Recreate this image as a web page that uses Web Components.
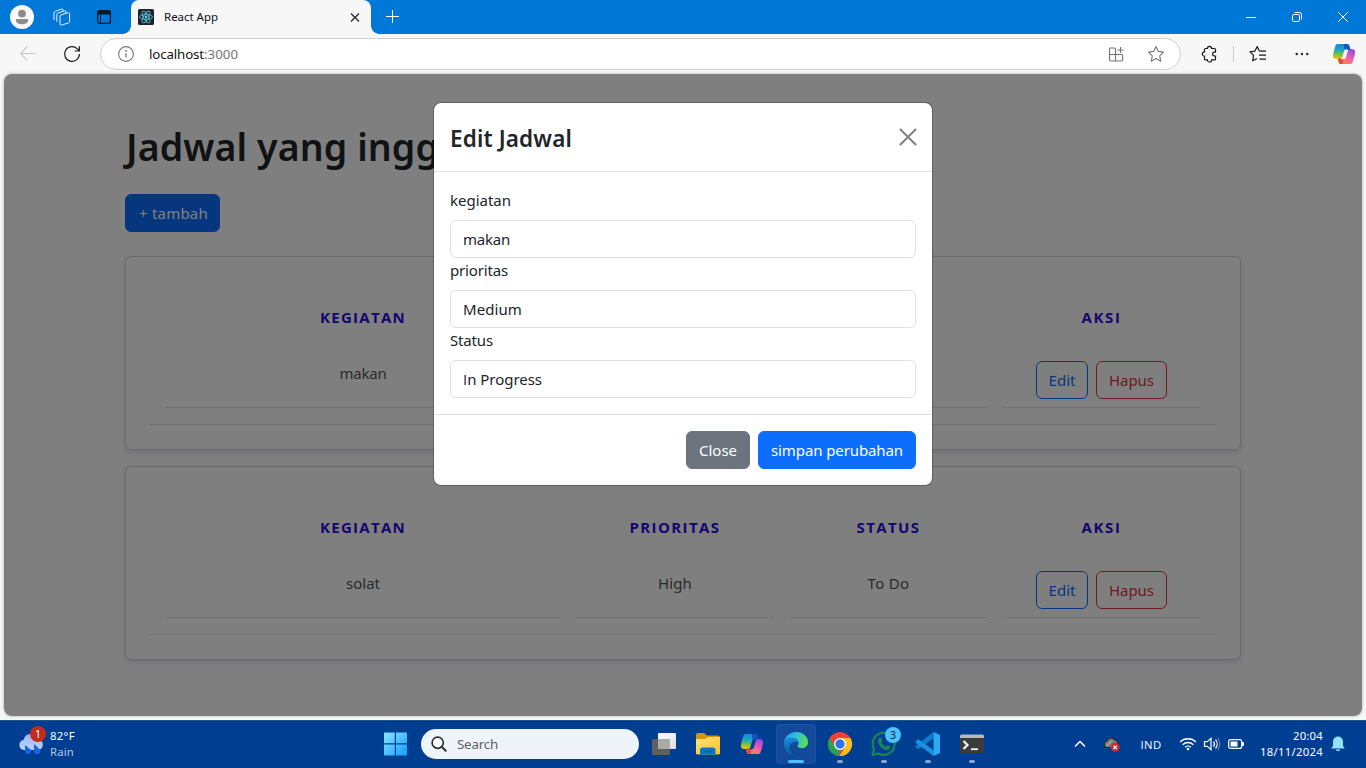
<!DOCTYPE html>
<html lang="id">
<head>
<meta charset="utf-8">
<title>React App</title>
<style>
html,body{margin:0;height:100%;overflow:hidden}
body{font-family:"Noto Sans","Open Sans",sans-serif;background:#f7f7f7}
</style>
</head>
<body>
<desktop-screen></desktop-screen>
<script>
const define = (name, html, setup) => {
  customElements.define(name, class extends HTMLElement {
    connectedCallback() {
      if (this.shadowRoot) return;
      const t = document.createElement('template');
      t.innerHTML = typeof html === 'function' ? html(this) : html;
      this.attachShadow({ mode: 'open' }).append(t.content.cloneNode(true));
      if (setup) setup(this);
    }
  });
};

const ICONS = {
  avatar: [24, 24, `<circle cx="12" cy="12" r="12" fill="#fafafa"/><circle cx="12" cy="8.6" r="3.9" fill="#8b8b8b"/><path d="M7 14h10a1.2 1.2 0 0 1 1.2 1.2c0 2.4-2.8 4-6.2 4s-6.2-1.6-6.2-4A1.2 1.2 0 0 1 7 14z" fill="#8b8b8b"/>`],
  workspaces: [20, 20, `<g transform="translate(-1 0)" fill="#0078d7" stroke="#e6f2fc" stroke-linejoin="round"><path d="M2 13V6c0-.8.4-1.300 1.200-1.600l6.300-2.300c.9-.3 1.500.1 1.500 1v7"/><path d="M4.800 14.800V7.600c0-.8.4-1.300 1.200-1.600l6.400-2.100c.9-.3 1.500.1 1.500 1v8"/><path d="M8 16.900V9.300c0-.8.4-1.200 1.100-1.400l7-2.200c.8-.3 1.500.1 1.500 1v7.700c0 .7-.3 1.100-1 1.400l-7 2.300c-.9.3-1.600-.2-1.600-1.200z"/></g>`],
  tabs: [16, 16, `<path d="M1.600 3.600a2 2 0 0 1 2-2h8.800a2 2 0 0 1 2 2v8.800a2 2 0 0 1-2 2H3.600a2 2 0 0 1-2-2z" fill="none" stroke="#071827" stroke-width="1.300"/><path d="M1.500 5.500V3.500a2 2 0 0 1 2-2h9a2 2 0 0 1 2 2v2z" fill="#071827"/><path d="M4.500 5v9" stroke="#071827"/>`],
  react: [16, 16, `<rect width="16" height="16" rx="1.500" fill="#20232a"/><g fill="none" stroke="#55bdd8" stroke-width=".9"><ellipse cx="8" cy="8" rx="6.500" ry="2.500"/><ellipse cx="8" cy="8" rx="6.500" ry="2.500" transform="rotate(60 8 8)"/><ellipse cx="8" cy="8" rx="6.500" ry="2.500" transform="rotate(120 8 8)"/></g><circle cx="8" cy="8" r="1.300" fill="#61dafb"/>`],
  close: [10, 10, `<path d="M1 1.500l8 8M9 1.500L1 9.500" stroke="#222" stroke-width="1.200"/>`],
  plus: [14, 14, `<path d="M6.500 0v13M0 6.500h13" stroke="#fff"/>`],
  min: [10, 10, `<path d="M0 5.500h10" stroke="#fff"/>`],
  restore: [10, 10, `<rect x=".5" y="2.500" width="7" height="7" rx="1.300" fill="none" stroke="#fff"/><path d="M2.600.5h4.900a2 2 0 0 1 2 2v4.900" fill="none" stroke="#fff"/>`],
  winclose: [10, 10, `<path d="M0 0l10 10M10 0L0 10" stroke="#fff"/>`],
  back: [16, 16, `<path d="M.5 7.500H16M7.300.7L.6 7.500l6.700 6.800" fill="none" stroke="#c8c8c8" stroke-width="1.100"/>`],
  reload: [18, 18, `<path d="M16.400 9A7.400 7.400 0 1 1 14.300 3.800L16 5.500M16.400 1.300V6h-4.700" fill="none" stroke="#1b1b1b" stroke-width="1.200"/>`],
  info: [16, 16, `<circle cx="8" cy="8" r="7.400" fill="none" stroke="#777" stroke-width="1.100"/><path d="M8 7.200v4.300" stroke="#777" stroke-width="1.300"/><circle cx="8" cy="5" r=".9" fill="#777"/>`],
  apps: [16, 16, `<path d="M2.200 2H6.500q1 0 1 1v5.500h-6V2.700Q1.500 2 2.200 2zM1.500 8.500h6V15H2.700Q1.500 15 1.500 13.800zM7.500 8.500h6q1.200 0 1.200 1.200v4.100q0 1.200-1.200 1.200h-6zM12.500 1v6M9.500 4h6" fill="none" stroke="#747474" stroke-width="1.100"/>`],
  star: [18, 18, `<path d="M9 1.500l2.300 4.900 5.300.7-3.900 3.700 1 5.400L9 13.600l-4.700 2.600 1-5.400L1.400 7.100l5.300-.7z" fill="none" stroke="#777" stroke-width="1.100" stroke-linejoin="round"/>`],
  puzzle: [18, 18, `<path d="M5.500 3.500h1.900a2.100 2.100 0 0 1 4.200 0h2.900q1 0 1 1v2.700h-1a1.900 1.900 0 0 0 0 3.800h1v2.900q0 1-1 1h-2.900a2.100 2.100 0 0 1-4.200 0H5.500q-1 0-1-1v-2.600a2.200 2.200 0 0 1 0-4.400V4.500q0-1 1-1z" fill="none" stroke="#1b1b1b" stroke-width="1.200"/>`],
  favs: [18, 18, `<path d="M10.500 6.200L8.200 1.500 6 6.100l-5 .7 3.600 3.600-.9 5.400L8 13.400M10.500 6.200H17M10 10.200h7M10.500 14.200H17" fill="none" stroke="#1b1b1b" stroke-width="1.200" stroke-linejoin="round"/>`],
  dots: [14, 4, `<g fill="#222"><circle cx="1.700" cy="2" r="1.200"/><circle cx="7" cy="2" r="1.200"/><circle cx="12.300" cy="2" r="1.200"/></g>`],
  copilot: [24, 24, `<defs><linearGradient id="a" x1=".4" y1="0" x2=".3" y2="1"><stop stop-color="#1689df"/><stop offset=".4" stop-color="#18a9c8"/><stop offset=".65" stop-color="#6bbf50"/><stop offset="1" stop-color="#f7c800"/></linearGradient><linearGradient id="b" x1=".8" y1="0" x2=".2" y2="1"><stop stop-color="#9348e8"/><stop offset=".45" stop-color="#e55bb4"/><stop offset=".75" stop-color="#ff7570"/><stop offset="1" stop-color="#f9803a"/></linearGradient></defs><path d="M18.500 22H9.200c-1.500 0-2.100-.8-2.600-2.300L5.600 16h3.300c1.600 0 2.300-.9 2.800-2.400L13.500 7h6.300c3.400 0 3.700 2.800 2.900 5.700l-1.500 5.600c-.6 2.300-1.100 3.700-2.700 3.700z" fill="url(#b)"/><path d="M5.500 2h9.300c1.500 0 2.100.8 2.600 2.300L18.400 8h-3.300c-1.600 0-2.300.9-2.800 2.400L10.200 17H4.200C.8 17 .5 14.200 1.300 11.300l1.500-5.600C3.400 3.400 3.900 2 5.500 2z" fill="url(#a)"/><path d="M12 2h3.200c1.200 0 1.900 1 2.300 2.300L18.600 8H15c-1.200 0-1.900.5-2.400 1.500z" fill="#1554bd"/><path d="M5.800 16.500h4.400c1.200 0 1.700-.3 2.200-1.200L10.600 21c-.2.700-.6 1-1.400 1-1.500 0-2.100-.8-2.600-2.300z" fill="#e04a3c"/><path d="M13.500 7.600h2.800l-2.500 8c-.4 1.200-1 1.700-2.100 1.700H8.500c1-.4 1.500-1.200 1.900-2.400l1.500-5.500c.4-1.200.7-1.600 1.600-1.800z" fill="var(--hole,#f7f7f7)"/>`],
  rain: [28, 30, `<defs><linearGradient id="c" x2="0" y2="1"><stop stop-color="#9db8f2"/><stop offset="1" stop-color="#bcd2fb"/></linearGradient></defs><path d="M6 21a5 5 0 0 1-.5-9.900A7.500 7.500 0 0 1 20 10a5.600 5.600 0 0 1 .5 11z" fill="url(#c)"/><path d="M7 16l4 3.200a3 3 0 1 1-4 2.800zM16 15l4.500 4.200a3.200 3.200 0 1 1-4.500 3z" fill="#1763e8"/>`],
  windows: [24, 24, `<defs><linearGradient id="d" x2="1" y2="1"><stop stop-color="#8be3ff"/><stop offset="1" stop-color="#139cf8"/></linearGradient></defs><path transform="translate(-.5 0)" d="M1 .5h10.300v10.700H.5V1zM12.500.5H23l.5.5v10.200h-11zM.5 12.400h10.800v11H1l-.5-.5zM12.500 12.400h11v10.500l-.5.5H12.500z" fill="url(#d)"/>`],
  search: [16, 16, `<circle cx="6.700" cy="6.700" r="5.600" fill="#fff" stroke="#303037" stroke-width="1.700"/><path d="M10.700 10.700l4 4" stroke="#303037" stroke-width="2" stroke-linecap="round"/>`],
  taskview: [24, 24, `<defs><linearGradient id="e" x2="1" y2="1"><stop stop-color="#fff"/><stop offset="1" stop-color="#ddd"/></linearGradient></defs><rect x="6" y="1" width="18" height="16" rx="1" fill="url(#e)"/><rect y="7" width="18" height="16" rx="1" fill="#606060"/><path d="M6 7h12v10H6z" fill="#a9aaa9"/>`],
  folder: [26, 24, `<defs><linearGradient id="f" x2="1" y2="1"><stop stop-color="#ffe37b"/><stop offset="1" stop-color="#fbc02d"/></linearGradient></defs><path d="M1 3q0-2 2-2h6l3 2.500h11q2 0 2 2V12H1z" fill="#d99500"/><path d="M1 7h9l3-2h12v16q0 1.500-1.500 1.500H2.500Q1 22.500 1 21z" fill="url(#f)"/><path d="M5 22.500V18q0-2.500 2.500-2.500h10.500q2.500 0 2.500 2.500v4.500z" fill="#0b74c8"/><path d="M9 19.500h7.500" stroke="#075aa5" stroke-width="1.200"/>`],
  edge: [26, 26, `<defs><linearGradient id="g" x1="0" y1=".3" x2="1" y2=".5"><stop stop-color="#2799e9"/><stop offset=".5" stop-color="#2bc4d5"/><stop offset="1" stop-color="#5fe04b"/></linearGradient><linearGradient id="h" x2="0" y2="1"><stop stop-color="#1688dc"/><stop offset="1" stop-color="#0c59a4"/></linearGradient></defs><path d="M1 13C1 6 6 1 13 1c7 0 12 4.500 12 10 0 4-2.700 6.200-6.200 6.200-3 0-4.300-1.200-4.300-2.200 0-.8 1.100-1.200 1.100-3 0-2.800-2.800-5-6.600-5C4.500 7 1.500 10 1 13z" fill="url(#g)"/><path d="M1 13c.3-3.500 3.300-6 7.200-6 4 0 7.300 2 7.400 4.800-1.400-1.200-3-1.500-4.400-.8C8 12.500 8.300 18 12 20.500c3.500 2.400 8 1.900 11.500-.6C21.500 23 17.800 25 13.500 25 6.500 25 1 19.700 1 13z" fill="url(#h)"/><path d="M11.200 11C7.200 12 5.500 16.500 7.200 20c1.200 2.700 3.900 4.700 6.600 5 4.100 0 7.700-2 9.700-5.100C20 22.400 15.500 22.900 12 20.500 8.300 18 8 12.500 11.200 11z" fill="#114a93"/>`],
  chrome: [26, 26, `<circle cx="13" cy="13" r="12" fill="#e94435"/><path d="M2.600 7L8 16l5 3-1 6A12 12 0 0 1 2.600 7z" fill="#26a252"/><path d="M13 7h10.400A12 12 0 0 1 12.500 25l5.700-9z" fill="#fbc116"/><circle cx="13" cy="13" r="6" fill="#fff"/><circle cx="13" cy="13" r="4.700" fill="#2876e8"/>`],
  whatsapp: [26, 26, `<path d="M3 18A11 11 0 1 1 7.500 22.500L1.600 24z" fill="none" stroke="#188552" stroke-width="2.200" stroke-linejoin="round"/><path d="M8 7.500c1-1.200 2-1 2.500 0l.9 2.100c.3.700-.7 1.500-1 1.900 1 2 2.300 3.300 4.500 4.200.6-.6 1.200-1.700 1.800-1.400l2.300 1.100c1 .5-.3 3.300-2.800 3.600C11.500 19.500 6 13 7 9z" fill="#188552"/>`],
  vscode: [26, 26, `<path d="M18.500 1v6.500L3.200 18.200.8 16.300v-1.500z" fill="#0b7dcc"/><path d="M.8 10.300l2.400-2L18.500 19v6L.8 11.600z" fill="#1595df"/><path d="M18.500 1L25 4v18l-6.500 3z" fill="#2aaaf3"/>`],
  terminal: [26, 22, `<path d="M1 3q0-1.500 1.500-1.500h21Q25 1.500 25 3v2.500H1z" fill="#b8b8b8"/><path d="M1 5h24v13.500q0 1.500-1.500 1.500h-21Q1 20 1 18.500z" fill="#3b3b3b"/><path d="M4.500 8l4 4-4 4" fill="none" stroke="#f3f3f3" stroke-width="2.200"/><path d="M12 16.200h7" stroke="#f3f3f3" stroke-width="1.800"/>`],
  chevron: [12, 8, `<path d="M1 6.500l5-5 5 5" fill="none" stroke="#fff" stroke-width="1.500"/>`],
  cloud: [18, 16, `<path d="M4 11.500a3.300 3.300 0 0 1 0-6.500A4.500 4.500 0 0 1 12 4a4 4 0 0 1 1 7.500z" fill="#777c82" stroke="#26282c" stroke-width="1.200"/><path d="M3 10l6-5" stroke="#a6a7aa" stroke-width="1.500"/><circle cx="12.200" cy="11.300" r="4.500" fill="#d92532"/><path d="M10.500 9.600l3.400 3.400M13.900 9.600l-3.400 3.400" stroke="#fff" stroke-width="1.100"/>`],
  wifi: [18, 16, `<g fill="none" stroke="#fff" stroke-width="1.350"><path d="M1 6a11.400 11.400 0 0 1 16 0M3.700 8.700a7.500 7.500 0 0 1 10.600 0M6.200 11.200a4 4 0 0 1 5.600 0"/></g><circle cx="9" cy="13" r="1.300" fill="#fff"/>`],
  speaker: [18, 16, `<g fill="none" stroke="#fff" stroke-width="1.200"><path d="M1.500 5.700h2.800L8 2.400v11.200l-3.700-3.300H1.500zM10.500 5.500a4 4 0 0 1 0 5M12.500 3.700a6.500 6.500 0 0 1 0 8.600"/><path d="M14.500 2a9 9 0 0 1 0 12" stroke="#5a7fb9"/></g>`],
  battery: [18, 12, `<rect x="1.600" y="1.600" width="13" height="8.800" rx="2" fill="none" stroke="#fff" stroke-width="1.200"/><rect x="3.500" y="3.500" width="7" height="5" rx=".5" fill="#fff"/><path d="M16 4v4" stroke="#fff" stroke-width="1.800"/>`],
  bell: [16, 18, `<path d="M8 1.500a5 5 0 0 1 5 5v4.200l1.700 2.800H1.300L3 10.700V6.500a5 5 0 0 1 5-5zM5.600 14.500h4.800A2.500 2.500 0 0 1 5.600 14.500z" fill="#8fe3ff"/>`],
  modalclose: [18, 18, `<path d="M1.500 1.500l15 15M16.500 1.500l-15 15" stroke="#808080" stroke-width="2" stroke-linecap="round"/>`],
};

define('app-icon', el => {
  const [w, h, body] = ICONS[el.getAttribute('name')];
  return `<style>:host{display:block;flex:none;line-height:0}svg{display:block}</style>
  <svg width="${w}" height="${h}" viewBox="0 0 ${w} ${h}">${body}</svg>`;
});

/* A run of text tracked so that it occupies the width given in "w".
   The "plain" attribute picks the face whose capital I has no serifs. */
define('fit-text', `<style>:host{display:inline-block;white-space:nowrap}:host([plain]){font-family:"Open Sans",sans-serif}</style><span><slot></slot></span>`, el => {
  const w = +el.getAttribute('w');
  const natural = el.shadowRoot.querySelector('span').getBoundingClientRect().width;
  el.style.letterSpacing = (w - natural) / el.textContent.length + 'px';
});

define('icon-cell', el => `<style>
  :host{display:flex;flex:none;align-items:center;justify-content:center;width:${el.getAttribute('w')}px;height:100%;position:relative}
</style><slot></slot>`);

define('title-bar', `<style>
  :host{display:flex;height:34px;background:#0078d7;align-items:center}
  .tab{position:relative;display:flex;align-items:center;box-sizing:border-box;width:240px;height:34px;background:#f7f7f7;border-radius:8px 8px 0 0;padding:0 11px 0 7px;font-size:11.500px;color:#111;margin-left:5px}
  .tab::before,.tab::after{content:"";position:absolute;bottom:0;width:8px;height:8px}
  .tab::before{left:-8px;background:radial-gradient(circle at 0 0,transparent 7.500px,#f7f7f7 8px)}
  .tab::after{right:-8px;background:radial-gradient(circle at 100% 0,transparent 7.500px,#f7f7f7 8px)}
  .tab fit-text{margin:-1px 0 0 10px;flex:1}
  .gap{flex:1}
</style>
<icon-cell w="44"><app-icon name="avatar"></app-icon></icon-cell>
<icon-cell w="37"><app-icon name="workspaces"></app-icon></icon-cell>
<icon-cell w="45"><app-icon name="tabs"></app-icon></icon-cell>
<div class="tab"><app-icon name="react"></app-icon><fit-text w="54">React App</fit-text><app-icon name="close"></app-icon></div>
<icon-cell w="43"><app-icon name="plus"></app-icon></icon-cell>
<div class="gap"></div>
<icon-cell w="46"><app-icon name="min"></app-icon></icon-cell>
<icon-cell w="46"><app-icon name="restore"></app-icon></icon-cell>
<icon-cell w="46"><app-icon name="winclose"></app-icon></icon-cell>`);

define('address-bar', `<style>
  :host{display:flex;height:40px;background:#f7f7f7;align-items:center;padding:0 2px 0 6px}
  .pill{display:flex;align-items:center;box-sizing:border-box;height:32px;width:1081px;margin:0 6px;border:1px solid #cfcfcf;border-radius:16px;background:#fff;padding:0 15px 0 17px}
  .url{flex:1;display:flex;margin-left:15px;font-size:13.300px;color:#111}
  .port{color:#767676}
  .pill app-icon+app-icon{margin-left:23px}
  .rule{width:1px;height:16px;background:#ccc;margin:0 2px}
</style>
<icon-cell w="44"><app-icon name="back"></app-icon></icon-cell>
<icon-cell w="44"><app-icon name="reload"></app-icon></icon-cell>
<div class="pill"><app-icon name="info"></app-icon>
  <div class="url"><fit-text w="55">localhost</fit-text><fit-text class="port" w="34">:3000</fit-text></div>
  <app-icon name="apps"></app-icon><app-icon name="star"></app-icon></div>
<icon-cell w="44"><app-icon name="puzzle"></app-icon></icon-cell>
<div class="rule"></div>
<icon-cell w="44"><app-icon name="favs"></app-icon></icon-cell>
<icon-cell w="44"><app-icon name="dots"></app-icon></icon-cell>
<icon-cell w="40"><app-icon name="copilot"></app-icon></icon-cell>`);

const BUTTONS = {
  primary: 'background:#0d6efd;border-color:#0d6efd;color:#fff',
  secondary: 'background:#6c757d;border-color:#6c757d;color:#fff',
  'outline-primary': 'border-color:#0d6efd;color:#0d6efd',
  'outline-danger': 'border-color:#dc3545;color:#dc3545',
};
define('bs-button', el => `<style>
  :host{display:flex;flex:none;box-sizing:border-box;height:38px;width:${el.getAttribute('w')}px;align-items:center;justify-content:center;border:1px solid;border-radius:6px;font-size:15px;line-height:24px;${BUTTONS[el.getAttribute('variant')]}}
</style><slot></slot>`);

define('schedule-card', `<style>
  :host{display:block;box-sizing:border-box;height:194px;border:1px solid #d4d4d4;border-radius:6px;padding:24px;box-shadow:0 2px 6px rgba(20,10,120,.15)}
  .table{display:grid;grid-template-columns:394px 198px 197px 197px;column-gap:16px;row-gap:16px;padding:16px;border-bottom:1px solid #dee2e6}
  .th{padding:8px 0;line-height:24px;font-size:15px;font-weight:700;color:#2a0ae0;text-align:center}
  .td{box-sizing:border-box;height:55px;padding-top:8px;line-height:24px;font-size:15px;color:#555;border-bottom:1px solid #dee2e6;text-align:center}
  .act{display:flex;justify-content:center;gap:8px}
</style>
<div class="table">
  <div class="th"><fit-text plain w="86">KEGIATAN</fit-text></div><div class="th"><fit-text plain w="91">PRIORITAS</fit-text></div><div class="th"><fit-text plain w="64">STATUS</fit-text></div><div class="th"><fit-text plain w="40">AKSI</fit-text></div>
  <div class="td"><slot name="kegiatan"></slot></div><div class="td"><slot name="prioritas"></slot></div><div class="td"><slot name="status"></slot></div>
  <div class="td act"><bs-button w="52" variant="outline-primary"><fit-text w="27">Edit</fit-text></bs-button><bs-button w="71" variant="outline-danger"><fit-text w="45">Hapus</fit-text></bs-button></div>
</div>`);

define('form-field', `<style>
  :host{display:block;font-size:15px;line-height:24px;color:#212529}
  .box{box-sizing:border-box;height:38px;margin-top:8px;padding:6px 12px;border:1px solid #dee2e6;border-radius:6px}
</style><slot name="label"></slot><div class="box"><slot></slot></div>`);

define('edit-modal', `<style>
  :host{position:absolute;left:429px;top:28px;box-sizing:border-box;width:500px;border:1px solid rgba(0,0,0,.24);background:#fff;background-clip:padding-box;border-radius:8px;color:#212529}
  header{display:flex;align-items:center;justify-content:space-between;height:36px;padding:16px 15px 16px 16px;border-bottom:1px solid #dee2e6;font-size:22.500px;font-weight:600}
  header fit-text{margin-top:2px}
  main{padding:16px}
  footer{display:flex;justify-content:flex-end;gap:8px;padding:16px;border-top:1px solid #dee2e6}
  .i{font-family:"Open Sans",sans-serif}
</style>
<header><fit-text w="122">Edit Jadwal</fit-text><app-icon name="modalclose"></app-icon></header>
<main>
  <form-field><fit-text slot="label" w="61">kegiatan</fit-text><fit-text w="47">makan</fit-text></form-field>
  <form-field><fit-text slot="label" w="58">prioritas</fit-text><fit-text w="59">Medium</fit-text></form-field>
  <form-field><fit-text slot="label" w="43">Status</fit-text><fit-text w="79"><span class="i">I</span>n Progress</fit-text></form-field>
</main>
<footer><bs-button w="64" variant="secondary"><fit-text w="38">Close</fit-text></bs-button><bs-button w="158" variant="primary"><fit-text w="132">simpan perubahan</fit-text></bs-button></footer>`);

define('jadwal-page', `<style>
  :host{display:block;position:relative;box-sizing:border-box;height:642px;margin:0 4px 4px;padding:50px 121px 0;background:#fff;border-radius:8px;overflow:hidden;box-shadow:0 0 3px rgba(0,0,0,.35)}
  h1{margin:0 0 22px;height:48px;line-height:46px;font-size:37.500px;font-weight:560;color:#212529;white-space:nowrap}
  h1 fit-text{margin-left:1px}
  schedule-card{margin-bottom:16px}
  bs-button{margin-bottom:24px}
  bs-button fit-text{margin-left:2px}
  .backdrop{position:absolute;inset:0;background:rgba(0,0,0,.5)}
</style>
<h1><fit-text w="313">Jadwal yang ingg</fit-text></h1>
<bs-button w="95" variant="primary"><fit-text w="69">+ tambah</fit-text></bs-button>
<schedule-card><fit-text slot="kegiatan" w="47">makan</fit-text></schedule-card>
<schedule-card><fit-text slot="kegiatan" w="34">solat</fit-text><fit-text slot="prioritas" w="34">High</fit-text><fit-text slot="status" w="42">To Do</fit-text></schedule-card>
<div class="backdrop"></div>
<edit-modal></edit-modal>`);

define('task-bar', `<style>
  :host{display:flex;box-sizing:border-box;height:48px;background:#003e92;box-shadow:inset 0 1px #1f548c;align-items:center;color:#fff;font-size:11.300px}
  .weather{display:flex;width:374px;align-items:center;line-height:16px}
  .pic{position:relative;margin:0 4px 0 18px}
  .num{position:absolute;display:grid;place-items:center;width:16px;height:16px;border-radius:50%;font-size:10.500px;line-height:16px}
  .red{background:#c42b1c;left:12px;top:-3px}
  .blue{background:#4cc2ff;color:#001c35;left:23px;top:7px}
  .dim{color:#b5c7e2}
  .search{display:flex;align-items:center;box-sizing:border-box;width:218px;height:30px;border-radius:15px;background:#eff3fa;margin:0 3px;padding-left:10px;color:#5c5f66;font-size:13.300px}
  .search fit-text{margin-left:10px}
  .active{background:#134a99;border-radius:4px;box-sizing:border-box;width:40px;height:40px;display:grid;place-items:center;box-shadow:inset 0 0 0 1px #1b529f}
  .bar{position:absolute;bottom:5px;height:3px;width:6px;border-radius:2px;background:#8aa5cf}
  .bar.on{width:16px;background:#4cc2ff}
  .gap{flex:1}
  .clock{width:67px;text-align:right;line-height:16px;margin-left:7px}
  app-icon{--hole:#003e92}
</style>
<div class="weather"><div class="pic"><app-icon name="rain"></app-icon><span class="num red">1</span></div><div><fit-text w="25">82°F</fit-text><br><fit-text class="dim" w="24">Rain</fit-text></div></div>
<icon-cell w="44"><app-icon name="windows"></app-icon></icon-cell>
<div class="search"><app-icon name="search"></app-icon><fit-text w="41">Search</fit-text></div>
<icon-cell w="44"><app-icon name="taskview"></app-icon></icon-cell>
<icon-cell w="44"><app-icon name="folder"></app-icon></icon-cell>
<icon-cell w="44"><app-icon name="copilot"></app-icon></icon-cell>
<icon-cell w="44"><div class="active"><app-icon name="edge"></app-icon></div><span class="bar on"></span></icon-cell>
<icon-cell w="44"><app-icon name="chrome"></app-icon><span class="bar"></span></icon-cell>
<icon-cell w="44"><app-icon name="whatsapp"></app-icon><span class="num blue">3</span><span class="bar"></span></icon-cell>
<icon-cell w="44"><app-icon name="vscode"></app-icon><span class="bar"></span></icon-cell>
<icon-cell w="44"><app-icon name="terminal"></app-icon><span class="bar"></span></icon-cell>
<div class="gap"></div>
<icon-cell w="32"><app-icon name="chevron"></app-icon></icon-cell>
<icon-cell w="32"><app-icon name="cloud"></app-icon></icon-cell>
<icon-cell w="46"><fit-text plain w="21">IND</fit-text></icon-cell>
<icon-cell w="27"><app-icon name="wifi"></app-icon></icon-cell>
<icon-cell w="21"><app-icon name="speaker"></app-icon></icon-cell>
<icon-cell w="27"><app-icon name="battery"></app-icon></icon-cell>
<div class="clock"><fit-text w="30">20:04</fit-text><br><fit-text w="63">18/11/2024</fit-text></div>
<icon-cell w="30"><app-icon name="bell"></app-icon></icon-cell>
<icon-cell w="13"></icon-cell>`);

define('desktop-screen', `<style>:host{display:flex;flex-direction:column;width:1366px;height:768px;background:#f7f7f7}</style>
<title-bar></title-bar><address-bar></address-bar><jadwal-page></jadwal-page><task-bar></task-bar>`);
</script>
</body>
</html>
